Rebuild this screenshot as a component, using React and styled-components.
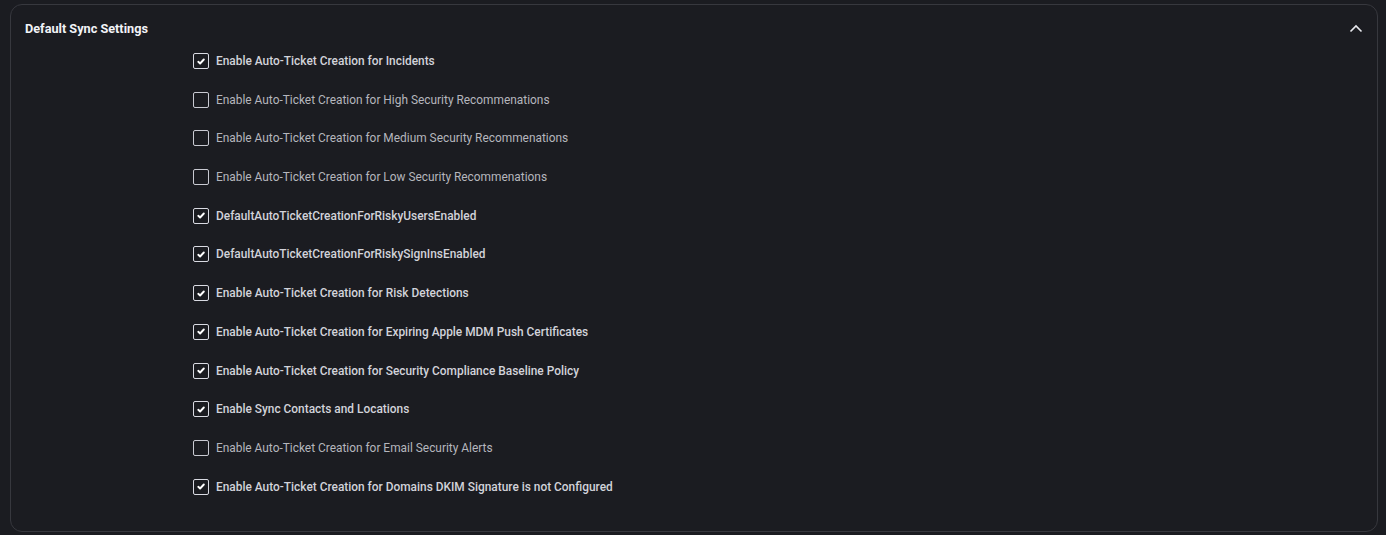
import React from "react";
import styled, { createGlobalStyle } from "styled-components";

const Global = createGlobalStyle`
  html, body { margin: 0; padding: 0; background: #1b1c21; }
  body { font-family: Roboto, "Liberation Sans", Arial, sans-serif; }
`;

const Page = styled.div`
  padding: 4px 8px 3px 10px;
  height: 535px;
  box-sizing: border-box;
`;

const Card = styled.section`
  border: 1px solid #37383e;
  border-radius: 12px;
  background: #1b1c21;
  height: 100%;
  box-sizing: border-box;
  display: flex;
  flex-direction: column;
`;

const Header = styled.div`
  display: flex;
  align-items: center;
  justify-content: space-between;
  padding: 13px 13px 0 14px;
  height: 20px;
`;

const Title = styled.h2`
  margin: 0;
  font-size: 12.7px;
  font-weight: 700;
  color: #f2f3f7;
  letter-spacing: 0;
`;

const Toggle = styled.button`
  background: none;
  border: none;
  padding: 0;
  width: 16px;
  height: 16px;
  display: flex;
  align-items: center;
  justify-content: center;
  cursor: pointer;
`;

const List = styled.div`
  display: flex;
  flex-direction: column;
  padding: 15px 0 0 182px;
  gap: 22.7px;
`;

const Row = styled.label`
  display: flex;
  align-items: center;
  gap: 7px;
  height: 16px;
  cursor: pointer;
`;

const Box = styled.span`
  width: 16px;
  height: 16px;
  box-sizing: border-box;
  border: 1.5px solid ${(p) => (p.$checked ? "#d9dae2" : "#c9cad2")};
  border-radius: 2px;
  display: flex;
  align-items: center;
  justify-content: center;
`;

const Label = styled.span`
  font-size: 11.9px;
  color: ${(p) => (p.$checked ? "#d2d3da" : "#b5b6bd")};
  font-weight: ${(p) => (p.$checked ? 500 : 400)};
  white-space: nowrap;
`;

const items = [
  ["Enable Auto-Ticket Creation for Incidents", true],
  ["Enable Auto-Ticket Creation for High Security Recommenations", false],
  ["Enable Auto-Ticket Creation for Medium Security Recommenations", false],
  ["Enable Auto-Ticket Creation for Low Security Recommenations", false],
  ["DefaultAutoTicketCreationForRiskyUsersEnabled", true],
  ["DefaultAutoTicketCreationForRiskySignInsEnabled", true],
  ["Enable Auto-Ticket Creation for Risk Detections", true],
  ["Enable Auto-Ticket Creation for Expiring Apple MDM Push Certificates", true],
  ["Enable Auto-Ticket Creation for Security Compliance Baseline Policy", true],
  ["Enable Sync Contacts and Locations", true],
  ["Enable Auto-Ticket Creation for Email Security Alerts", false],
  ["Enable Auto-Ticket Creation for Domains DKIM Signature is not Configured", true],
];

const Check = () => (
  <svg width="8" height="7" viewBox="0 0 8 7">
    <path d="M1.3 3.8 L3.1 5.5 L6.8 1.5" fill="none" stroke="#ffffff" strokeWidth="1.9" strokeLinecap="round" strokeLinejoin="round" />
  </svg>
);

export default function App() {
  return (
    <>
      <Global />
      <Page>
        <Card>
          <Header>
            <Title>Default Sync Settings</Title>
            <Toggle aria-label="collapse">
              <svg width="14" height="9" viewBox="0 0 14 9">
                <path d="M1.5 7.5 L7 2 L12.5 7.5" fill="none" stroke="#e8e9ee" strokeWidth="1.6" />
              </svg>
            </Toggle>
          </Header>
          <List>
            {items.map(([text, checked]) => (
              <Row key={text}>
                <Box $checked={checked}>{checked && <Check />}</Box>
                <Label $checked={checked}>{text}</Label>
              </Row>
            ))}
          </List>
        </Card>
      </Page>
    </>
  );
}
